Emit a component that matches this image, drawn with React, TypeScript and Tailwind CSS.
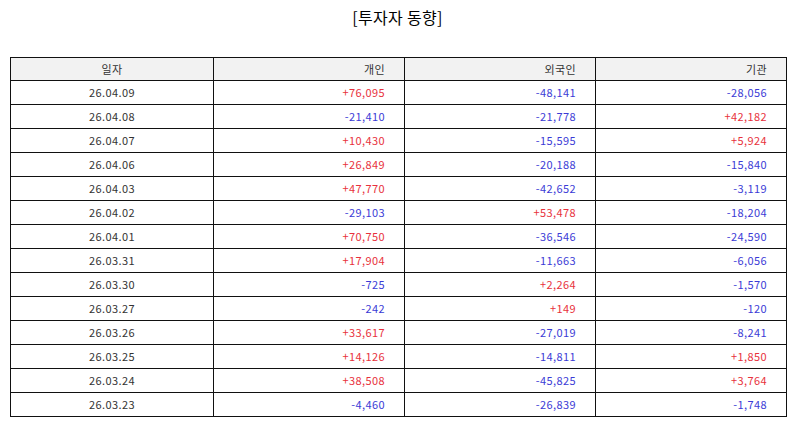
import React from "react";

const rows: [string, string, string, string][] = [
  ["26.04.09", "+76,095", "-48,141", "-28,056"],
  ["26.04.08", "-21,410", "-21,778", "+42,182"],
  ["26.04.07", "+10,430", "-15,595", "+5,924"],
  ["26.04.06", "+26,849", "-20,188", "-15,840"],
  ["26.04.03", "+47,770", "-42,652", "-3,119"],
  ["26.04.02", "-29,103", "+53,478", "-18,204"],
  ["26.04.01", "+70,750", "-36,546", "-24,590"],
  ["26.03.31", "+17,904", "-11,663", "-6,056"],
  ["26.03.30", "-725", "+2,264", "-1,570"],
  ["26.03.27", "-242", "+149", "-120"],
  ["26.03.26", "+33,617", "-27,019", "-8,241"],
  ["26.03.25", "+14,126", "-14,811", "+1,850"],
  ["26.03.24", "+38,508", "-45,825", "+3,764"],
  ["26.03.23", "-4,460", "-26,839", "-1,748"],
];

function Num({ v }: { v: string }) {
  const cls = v.startsWith("+") ? "text-[#e8313c]" : "text-[#3b3bd6]";
  return (
    <td className={`border border-[#111] text-right pr-[19px] ${cls}`}>{v}</td>
  );
}

export default function App() {
  return (
    <div
      className="w-[795px] h-[425px] bg-white text-[#333] overflow-hidden"
      style={{ fontFamily: '"Noto Sans CJK KR", "Noto Sans", sans-serif' }}
    >
      <div className="h-[57px] pt-[5px] text-center text-[16px] leading-[24px] tracking-[0.3px] text-black">
        [투자자 동향]
      </div>
      <table className="ml-[10px] w-[776px] border-collapse table-fixed text-[11px] tracking-[0.4px]">
        <colgroup>
          <col className="w-[203px]" />
          <col className="w-[191px]" />
          <col className="w-[191px]" />
          <col className="w-[191px]" />
        </colgroup>
        <thead>
          <tr className="h-[23px] bg-[#f2f2f2]">
            <th className="border border-[#111] font-normal text-center">일자</th>
            <th className="border border-[#111] font-normal text-right pr-[19px]">개인</th>
            <th className="border border-[#111] font-normal text-right pr-[19px]">외국인</th>
            <th className="border border-[#111] font-normal text-right pr-[19px]">기관</th>
          </tr>
        </thead>
        <tbody>
          {rows.map((r) => (
            <tr key={r[0]} className="h-[24px]">
              <td className="border border-[#111] text-center">{r[0]}</td>
              <Num v={r[1]} />
              <Num v={r[2]} />
              <Num v={r[3]} />
            </tr>
          ))}
        </tbody>
      </table>
    </div>
  );
}
